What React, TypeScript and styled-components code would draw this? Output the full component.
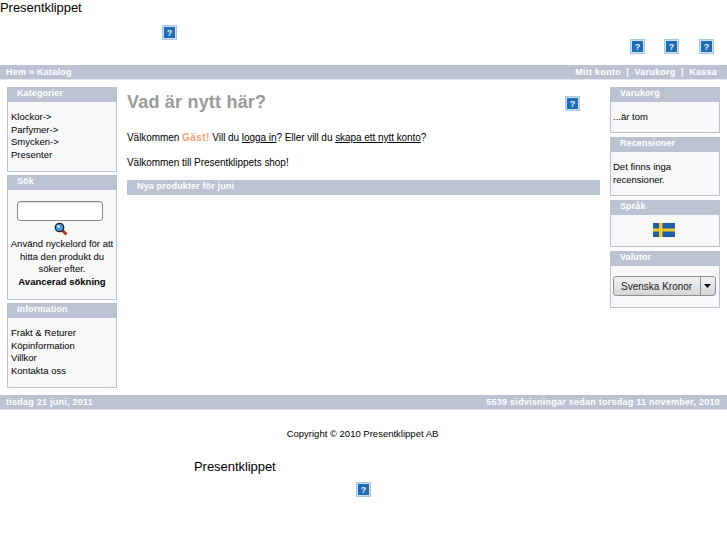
import React from "react";
import styled, { createGlobalStyle } from "styled-components";

const Global = createGlobalStyle`
  html, body { margin: 0; padding: 0; background: #fff; }
  body { font-family: "Liberation Sans", Arial, sans-serif; font-size: 10px; color: #000; }
`;

const Page = styled.div`width: 727px; height: 545px; overflow: hidden;`;
const Title = styled.div`font-size: 13px; line-height: 16px; height: 16px; letter-spacing: -0.05px;`;
const HeaderIcons = styled.div`height: 49px;`;
const HeaderLeft = styled.div`padding: 9px 0 0 162px; height: 14px;`;
const HeaderRight = styled.div`display: flex; justify-content: flex-end; gap: 19.6px; padding: 0 13px 0 0;`;

const Bar = styled.div<{ $right: number }>`
  height: 15px; background: #bbc3d3; color: #fff; font-weight: bold; font-size: 9px; line-height: 14px;
  letter-spacing: 0.25px; display: flex; justify-content: space-between; padding: 0 ${p => p.$right}px 0 6px; border-bottom: 1px solid #e4e7ee; box-sizing: border-box;
`;
const Columns = styled.div`display: flex; padding: 7px 7px 0; height: 315px; box-sizing: border-box;`;
const Side = styled.div`width: 110px; flex: none; display: flex; flex-direction: column; gap: 3px;`;
const RightSide = styled(Side)`margin-left: 10px; gap: 4px;`;
const Main = styled.div`flex: 1; margin-left: 10px; min-width: 0;`;

const Box = styled.div`border: 1px solid #bbc3d3; border-top: none; background: #f8f8f9; box-sizing: border-box;`;
const BoxHead = styled.div`
  height: 15px; margin: 0 -1px; background: #bbc3d3; color: #fff; font-weight: bold; font-size: 9px; line-height: 13px; letter-spacing: 0.1px; padding-left: 10px;
`;
const BoxBody = styled.div<{ $h: number; $center?: boolean; $pad?: string }>`
  height: ${p => p.$h}px; line-height: 12.67px; padding: ${p => p.$pad ?? "9px 3px 0"}; box-sizing: border-box;
  font-size: 9.5px; text-align: ${p => (p.$center ? "center" : "left")};
`;
const SearchInput = styled.div`
  width: 86px; height: 20px; border: 1px solid #8a8a8a; border-radius: 3px; background: #fff; margin: 0 0 0 8px; box-shadow: inset 0 1px 1px #ddd; box-sizing: border-box;
`;
const SearchGlyph = styled.div`height: 17px; padding: 0 2px 2px 0; box-sizing: border-box; display: flex; justify-content: center; align-items: center;`;
const Strong = styled.b`display: block;`;

const HeadRow = styled.div`display: flex; justify-content: space-between; align-items: flex-start; height: 31px; padding-right: 20px;`;
const H1 = styled.h1`margin: 0; font-size: 18px; line-height: 20px; padding-top: 5px; font-weight: bold; color: #9a9a9a; letter-spacing: 0.2px;`;
const HeadIcon = styled.div`padding-top: 9px;`;
const P = styled.p`margin: 0; font-size: 10px; line-height: 12px; letter-spacing: -0.05px;`;
const Intro = styled(P)`margin-top: 14px;`;
const Intro2 = styled(P)`margin-top: 13px;`;
const Guest = styled.b`color: #f4a078; letter-spacing: 0.4px;`;
const Link = styled.a`color: #000; text-decoration: underline;`;
const SectionBar = styled.div`
  margin-top: 11px; height: 15px; background: #bbc3d3; color: #fff; font-weight: bold; font-size: 9px; line-height: 13px; letter-spacing: 0.14px; padding-left: 10px;
`;
const Copyright = styled.div`text-align: center; font-size: 9.5px; line-height: 12px; padding: 18px 2px 0 0; height: 20px;`;
const FootTitle = styled.div`font-size: 13px; line-height: 16px; padding: 11px 0 0 194px; letter-spacing: -0.05px;`;
const FootIcon = styled.div`padding: 7px 0 0 356px;`;
const Select = styled.div`
  display: flex; height: 20px; border: 1px solid #8f8f8f; border-radius: 3px; background: linear-gradient(#f2f2f2, #d6d6d6); box-sizing: border-box; color: #222;
`;
const SelectText = styled.div`flex: 1; font-size: 10px; line-height: 20px; padding-left: 7px; border-right: 1px solid #8f8f8f;`;
const SelectArrow = styled.div`width: 14px; display: flex; align-items: center; justify-content: center;`;
const FlagRow = styled.div`display: flex; justify-content: center; padding-right: 2px;`;

const Help = () => (
  <svg width="15" height="15" viewBox="0 0 15 15" style={{ display: "block" }}>
    <rect x="0.5" y="0.5" width="14" height="14" fill="#cfe0f2" stroke="#a9c6e6" />
    <rect x="2" y="2" width="11" height="11" fill="#1f6db5" />
    <text x="7.5" y="11" textAnchor="middle" fontSize="9" fontWeight="bold" fill="#e8f0f8" fontFamily="Liberation Sans">?</text>
  </svg>
);

export default function App() {
  return (
    <Page>
      <Global />
      <Title>Presentklippet</Title>
      <HeaderIcons>
        <HeaderLeft><Help /></HeaderLeft>
        <HeaderRight><Help /><Help /><Help /></HeaderRight>
      </HeaderIcons>
      <Bar $right={10}><span>Hem » Katalog</span><span>Mitt konto &nbsp;|&nbsp; Varukorg &nbsp;|&nbsp; Kassa</span></Bar>
      <Columns>
        <Side>
          <Box>
            <BoxHead>Kategorier</BoxHead>
            <BoxBody $h={69}>Klockor-&gt;<br />Parfymer-&gt;<br />Smycken-&gt;<br />Presenter</BoxBody>
          </Box>
          <Box>
            <BoxHead>Sök</BoxHead>
            <BoxBody $h={109} $center $pad="11px 1px 0">
              <SearchInput />
              <SearchGlyph>
                <svg width="14" height="14" viewBox="0 0 14 14">
                  <line x1="8" y1="8" x2="12.5" y2="12.5" stroke="#b8352a" strokeWidth="3" />
                  <circle cx="5.5" cy="5.5" r="4.2" fill="#3f9be0" stroke="#222" strokeWidth="1.3" />
                  <circle cx="4.5" cy="4.5" r="1.4" fill="#dff0fb" />
                </svg>
              </SearchGlyph>
              Använd nyckelord för att hitta den produkt du söker efter.
              <Strong>Avancerad sökning</Strong>
            </BoxBody>
          </Box>
          <Box>
            <BoxHead>Information</BoxHead>
            <BoxBody $h={69}>Frakt &amp; Returer<br />Köpinformation<br />Villkor<br />Kontakta oss</BoxBody>
          </Box>
        </Side>
        <Main>
          <HeadRow><H1>Vad är nytt här?</H1><HeadIcon><Help /></HeadIcon></HeadRow>
          <Intro>Välkommen <Guest>Gäst!</Guest> Vill du <Link>logga in</Link>? Eller vill du <Link>skapa ett nytt konto</Link>?</Intro>
          <Intro2>Välkommen till Presentklippets shop!</Intro2>
          <SectionBar>Nya produkter för juni</SectionBar>
        </Main>
        <RightSide>
          <Box>
            <BoxHead>Varukorg</BoxHead>
            <BoxBody $h={30} $pad="9px 2px 0">...är tom</BoxBody>
          </Box>
          <Box>
            <BoxHead>Recensioner</BoxHead>
            <BoxBody $h={43} $pad="9px 2px 0">Det finns inga recensioner.</BoxBody>
          </Box>
          <Box>
            <BoxHead>Språk</BoxHead>
            <BoxBody $h={31} $center $pad="8px 0 0">
              <FlagRow>
                <svg width="22" height="14" viewBox="0 0 22 14">
                  <rect width="22" height="14" fill="#1f5fa8" />
                  <rect x="6" width="3.5" height="14" fill="#f0c82c" />
                  <rect y="5.5" width="22" height="3" fill="#f0c82c" />
                </svg>
              </FlagRow>
            </BoxBody>
          </Box>
          <Box>
            <BoxHead>Valutor</BoxHead>
            <BoxBody $h={41} $pad="10px 3px 0 2px">
              <Select>
                <SelectText>Svenska Kronor</SelectText>
                <SelectArrow>
                  <svg width="8" height="5" viewBox="0 0 8 5"><path d="M0 0h7L3.5 4z" fill="#111" /></svg>
                </SelectArrow>
              </Select>
            </BoxBody>
          </Box>
        </RightSide>
      </Columns>
      <Bar $right={7}><span>tisdag 21 juni, 2011</span><span>5539 sidvisningar sedan torsdag 11 november, 2010</span></Bar>
      <Copyright>Copyright © 2010 Presentklippet AB</Copyright>
      <FootTitle>Presentklippet</FootTitle>
      <FootIcon><Help /></FootIcon>
    </Page>
  );
}
